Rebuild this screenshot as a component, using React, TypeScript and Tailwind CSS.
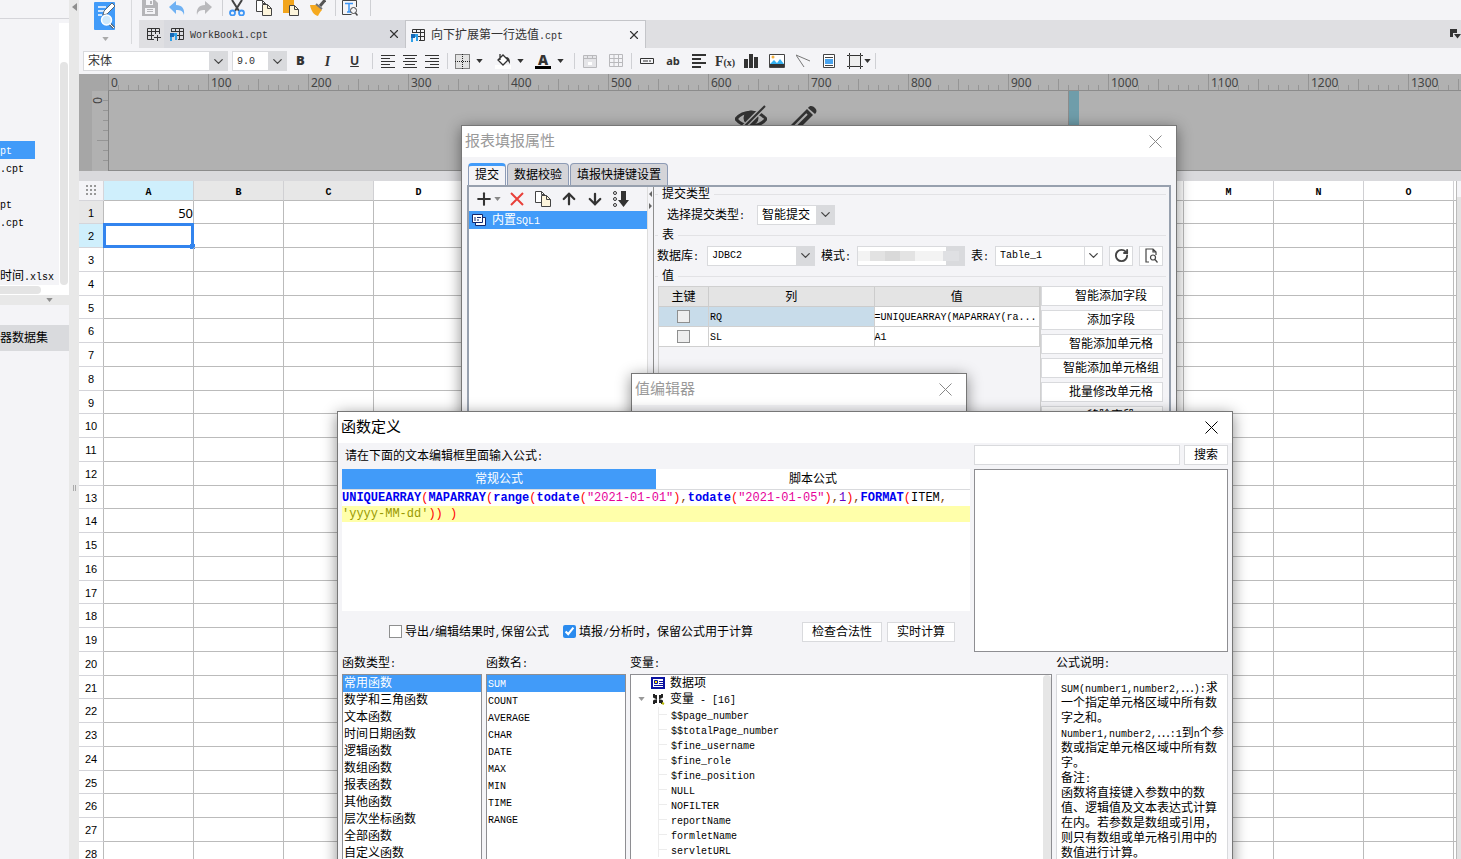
import { type ReactNode } from 'react';
import { ArrowDown, ArrowUp, ChevronDown, Plus, RotateCw, X } from 'lucide-react';

type FileRow = {
  name: string;
  selected?: boolean;
};

const files: FileRow[] = [
  { name: 'pt', selected: true },
  { name: '.cpt' },
  { name: '' },
  { name: 'pt' },
  { name: '.cpt' },
  { name: '' },
  { name: '' },
  { name: '时间.xlsx' },
];

const columns = 'ABCDEFGHIJKLMNO'.split('');
const rows = Array.from({ length: 28 }, (_, i) => i + 1);
const rulerMarks = Array.from({ length: 14 }, (_, i) => i * 100);

const functionTypes = [
  '常用函数',
  '数学和三角函数',
  '文本函数',
  '时间日期函数',
  '逻辑函数',
  '数组函数',
  '报表函数',
  '其他函数',
  '层次坐标函数',
  '全部函数',
  '自定义函数',
];

const functionNames = ['SUM', 'COUNT', 'AVERAGE', 'CHAR', 'DATE', 'MAX', 'MIN', 'TIME', 'RANGE'];

const variables = [
  '$$page_number',
  '$$totalPage_number',
  '$fine_username',
  '$fine_role',
  '$fine_position',
  'NULL',
  'NOFILTER',
  'reportName',
  'formletName',
  'servletURL',
];

const description = [
  'SUM(number1,number2,…):求',
  '一个指定单元格区域中所有数',
  '字之和。',
  'Number1,number2,…:1到n个参',
  '数或指定单元格区域中所有数',
  '字。',
  '备注:',
  '函数将直接键入参数中的数',
  '值、逻辑值及文本表达式计算',
  '在内。若参数是数组或引用，',
  '则只有数组或单元格引用中的',
  '数值进行计算。',
];

const fieldButtons = ['智能添加字段', '添加字段', '智能添加单元格', '智能添加单元格组', '批量修改单元格', '移除字段'];

// half-width runs are set in a 6px mono, the rest in the 12px CJK face
function T({ children }: { children: string }) {
  return (
    <span>
      {children.split(/([\x20-\x7e]+)/).map((part, i) =>
        i % 2 ? (
          <span key={i} className="font-['Liberation_Mono',monospace] text-[10px] whitespace-pre">
            {part}
          </span>
        ) : (
          part
        ),
      )}
    </span>
  );
}

function Sep({ tight }: { tight?: boolean }) {
  return (
    <div className={tight ? 'px-0.5' : 'px-1'}>
      <div className="h-4 w-px bg-[#cfd0d4]" />
    </div>
  );
}

function Caret({ className = 'fill-[#333]' }: { className?: string }) {
  return (
    <svg viewBox="0 0 8 5" className={`h-1 w-[7px] shrink-0 ${className}`}>
      <path d="M0 0h8L4 5z" />
    </svg>
  );
}

type ToolProps = {
  label: string;
  children: ReactNode;
  className?: string;
};

function Tool({ label, children, className = 'w-[26px] justify-center' }: ToolProps) {
  return (
    <button type="button" aria-label={label} className={`flex h-5 shrink-0 items-center ${className}`}>
      {children}
    </button>
  );
}

type ComboProps = {
  label: string;
  value: string;
  className: string;
  text?: string;
  plain?: boolean;
};

function Combo({ label, value, className, text = 'text-[12px]', plain }: ComboProps) {
  return (
    <div className={`relative flex h-5 shrink-0 border border-[#d9dadd] bg-white ${className}`}>
      <select aria-label={label} className={`w-full appearance-none bg-transparent pr-5 pl-1 outline-none ${text}`}>
        <option>{value}</option>
      </select>
      <span
        className={`pointer-events-none absolute inset-y-0 right-0 flex w-[18px] items-center justify-center ${plain ? 'border-l border-[#d9dadd]' : 'bg-[#d9dadd]'}`}
      >
        <ChevronDown size={15} strokeWidth={2} color="#444" className="shrink-0" />
      </span>
    </div>
  );
}

function PushButton({ children, className = '' }: { children: string; className?: string }) {
  return (
    <button type="button" className={`h-5 shrink-0 border border-[#d9dadd] bg-white leading-none ${className}`}>
      {children}
    </button>
  );
}

function SheetIcon() {
  return (
    <svg viewBox="0 0 14 14" className="size-[14px] shrink-0" fill="none">
      <path d="M1.500 5V1.500h12v11H8M1.500 4.500h12M5.500 1.500v3M9.500 1.500v11M6 8.500h7" stroke="#333" />
      <path d="M0 6h4v4H0z" fill="#1769b5" />
      <path d="M4 6h3v7H5V9H4zM0 10h2v4H0z" fill="#2ea0e8" />
    </svg>
  );
}

function PagesIcon() {
  return (
    <svg viewBox="0 0 16 16" className="size-4 shrink-0" fill="#fff" stroke="#444">
      <path d="M.5.5h6l3 3v8h-9z" />
      <path d="M6.500 4.500h5l4 4v7h-9z" fill="#fdf5dc" />
      <path d="M11.500 4.500v4h4M6.500.5v3h3" fill="none" />
    </svg>
  );
}

function Sidebar() {
  return (
    <>
      <aside className="flex w-[69px] shrink-0 flex-col overflow-hidden bg-[#f4f4f7]">
        <div className="h-[19px] shrink-0 border-b border-[#d5d5da]" />
        <div className="flex h-[266px] shrink-0 pt-1">
          <ul className="w-[59px] overflow-hidden pt-[118px]">
            {files.map((file, i) => (
              <li
                key={i}
                className={`h-[18px] leading-[18px] whitespace-nowrap ${file.selected ? 'w-[35px] bg-[#419bf9] text-white' : ''}`}
              >
                <T>{file.name}</T>
              </li>
            ))}
          </ul>
          <div className="flex-1 bg-white px-px pt-[39px]">
            <div className="h-full rounded-sm bg-[#e4e4e4]" />
          </div>
        </div>
        <div className="h-[10px] shrink-0 bg-white py-px">
          <div className="h-2 w-[41px] rounded-r bg-[#e4e4e4]" />
        </div>
        <div className="flex h-[10px] shrink-0 items-center justify-end bg-[#e8e8e8] pr-4">
          <Caret className="fill-[#8e8e8e]" />
        </div>
        <div className="h-5 shrink-0" />
        <h2 className="h-[26px] shrink-0 bg-[#d9dadd] leading-[26px] whitespace-nowrap">器数据集</h2>
      </aside>
      <div className="flex w-[10px] shrink-0 flex-col items-center justify-between bg-[#e8e8e8] pt-[3px]">
        <svg viewBox="0 0 5 8" className="h-2 w-[5px] fill-[#8e8e8e]">
          <path d="M5 0v8L0 4z" />
        </svg>
        <div className="flex w-full flex-1 items-center justify-center pt-[105px]">
          <div className="h-[6px] w-[3px] border-x border-[#aaa]" />
        </div>
      </div>
    </>
  );
}

function TopBar() {
  return (
    <header className="flex h-12 shrink-0 bg-[#f4f4f7]">
      <button type="button" aria-label="模板" className="flex w-[52px] shrink-0 flex-col items-center pt-px">
        <svg viewBox="0 0 22 30" className="h-[30px] w-[22px]">
          <rect y="1" width="21" height="28" rx="1" fill="#419bf9" />
          <path d="M4 6h8M4 10h6M4 14h4" stroke="#fff" strokeWidth="1.500" />
          <path d="M9 14l1-4 8-8 3 3-8 8z" fill="#fff" stroke="#5b6875" />
          <path d="M16 23l4 4" stroke="#5b6875" strokeWidth="3" />
          <path d="M16 23l4 4" stroke="#fff" />
          <circle cx="12.500" cy="19" r="5" fill="#cfe8fb" stroke="#fff" strokeWidth="1.500" />
        </svg>
        <span className="pt-1.5">
          <Caret className="fill-[#aaa]" />
        </span>
      </button>
      <div className="h-11 w-px shrink-0 bg-[#d9dadd]" />
      <div className="flex min-w-0 flex-1 flex-col pl-[7px]">
        <div className="flex h-5 shrink-0 items-start overflow-hidden">
          <div className="-mt-0.5 flex items-center">
            <Tool label="保存" className="w-[27px] px-[3px]">
              <svg viewBox="0 0 16 16" className="size-4">
                <path d="M0 0h13l3 3v13H0z" fill="#b5b5b8" />
                <path d="M4 0h7v5H4zM3 8h10v6H3z" fill="#f4f4f7" />
                <path d="M8 1h2v3H8zM5 9h6v1H5zM5 11h6v1H5z" fill="#b5b5b8" />
              </svg>
            </Tool>
            <Tool label="撤销" className="w-[27px] px-[3px]">
              <svg viewBox="0 0 16 16" className="size-4 fill-[#6fb1f3]">
                <path d="M0 7l7-6v4c6 0 9 4 8 10-1-4-3-5-8-5v4z" />
              </svg>
            </Tool>
            <Tool label="重做" className="w-[27px] px-[3px]">
              <svg viewBox="0 0 16 16" className="size-4 fill-[#b9b9bc]">
                <path d="M16 7L9 1v4C3 5 0 9 1 15c1-4 3-5 8-5v4z" />
              </svg>
            </Tool>
            <Sep tight />
            <Tool label="剪切" className="w-[27px] px-1">
              <svg viewBox="0 0 16 16" className="size-4" fill="none">
                <path d="M3 0l7 11M13 0L6 11" stroke="#444" strokeWidth="2" />
                <circle cx="3.500" cy="13" r="2.500" stroke="#3d95f5" strokeWidth="1.800" />
                <circle cx="12.500" cy="13" r="2.500" stroke="#3d95f5" strokeWidth="1.800" />
              </svg>
            </Tool>
            <Tool label="复制" className="w-[27px] px-1">
              <PagesIcon />
            </Tool>
            <Tool label="粘贴" className="w-[27px] px-1">
              <svg viewBox="0 0 16 16" className="size-4">
                <path d="M0 0h11v13H0z" fill="#f2a51d" />
                <path d="M6.500 5.500h5l4 4v6h-9z" fill="#fdf5dc" stroke="#444" />
                <path d="M11.500 5.500v4h4" fill="none" stroke="#444" />
              </svg>
            </Tool>
            <Tool label="格式刷" className="w-[27px] px-1">
              <svg viewBox="0 0 16 16" className="size-4">
                <path d="M10 6l5-6" stroke="#555" strokeWidth="3" />
                <path d="M0 5h7l5 5c-2 2-3 4-4 6-4-1-7-5-8-11z" fill="#f5a91f" />
                <path d="M6 4l6 5" stroke="#777" strokeWidth="2" />
              </svg>
            </Tool>
            <Sep tight />
            <Tool label="查找" className="w-[30px] px-1">
              <svg viewBox="0 0 16 16" className="size-4" fill="none" stroke="#444">
                <path d="M14.500 7V.5H.5v14h9" />
                <path d="M3 3.500h8M7 3v9M5 12h4" stroke="#3d95f5" strokeWidth="1.500" />
                <circle cx="11.500" cy="10.500" r="3" fill="#f4f4f7" />
                <path d="M13.500 13l2 2.500" strokeWidth="1.500" />
              </svg>
            </Tool>
            <Sep tight />
          </div>
        </div>
        <nav className="flex h-7 items-stretch bg-[#dfdfe2] text-[#333]">
          <button type="button" aria-label="新建" className="flex w-[25px] items-center pl-2">
            <svg viewBox="0 0 14 14" className="size-[14px]" fill="none" stroke="#333">
              <path d="M7 12.500H.5v-11h12V7M.5 4.500h12M.5 8.500H7M4.500 1v12M8.500 1v6M10.500 8v6M7 10.500h7" />
            </svg>
          </button>
          <div className="flex w-[242px] items-center gap-1.5 border-r border-[#c4c5c9] bg-[#d9dadf] pr-1 pl-1.5">
            <SheetIcon />
            <a href="#workbook1" className="flex-1">
              <T>WorkBook1.cpt</T>
            </a>
            <button type="button" aria-label="关闭">
              <X size={14} />
            </button>
          </div>
          <div className="flex w-[240px] items-center gap-1.5 border-t border-r border-[#c4c5c9] bg-[#f4f4f7] pr-1 pl-[5px]">
            <SheetIcon />
            <a href="#current" className="flex-1">
              <T>向下扩展第一行选值.cpt</T>
            </a>
            <button type="button" aria-label="关闭">
              <X size={14} />
            </button>
          </div>
          <button type="button" aria-label="更多" className="ml-auto w-3">
            <svg viewBox="0 0 12 10" className="h-[10px] w-3 fill-[#333]">
              <path d="M1 0h7v4H4v4H1zM5 5h7L8.500 9.500z" />
            </svg>
          </button>
        </nav>
      </div>
    </header>
  );
}

function FormatBar() {
  return (
    <div className="flex h-[26px] shrink-0 items-center bg-[#f4f4f7] pl-1 text-[#333]">
      <Combo label="字体" value="宋体" className="mr-1 w-[145px]" />
      <Combo label="字号" value="9.0" className="w-[55px]" text="font-['Liberation_Mono',monospace] text-[10px]" />
      <Tool label="加粗" className="w-[27px] justify-center">
        <b className="font-['Open_Sans',sans-serif] text-[13px] font-extrabold">B</b>
      </Tool>
      <Tool label="斜体" className="w-[27px] justify-center">
        <i className="font-['Liberation_Serif',serif] text-[14px] font-bold">I</i>
      </Tool>
      <Tool label="下划线" className="w-[27px] justify-center">
        <u className="text-[12px] font-bold">U</u>
      </Tool>
      <Sep />
      {['M0 1.500h14M0 4.500h9M0 7.500h14M0 10.500h9M0 13.500h14', 'M0 1.500h14M2 4.500h10M0 7.500h14M2 10.500h10M0 13.500h14', 'M0 1.500h14M5 4.500h9M0 7.500h14M5 10.500h9M0 13.500h14'].map(
        (d, i) => (
          <Tool key={d} label={['左对齐', '居中', '右对齐'][i]} className="w-[22px] justify-center">
            <svg viewBox="0 0 14 14" className="size-[14px]" stroke="#333">
              <path d={d} />
            </svg>
          </Tool>
        ),
      )}
      <Sep />
      <Tool label="边框" className="w-10 gap-1.5 pl-[3px]">
        <svg viewBox="0 0 15 15" className="size-[15px]">
          <rect width="15" height="15" fill="#e2e2e2" />
          <path d="M.5.5h14v14H.5zM7.500 0v15M0 7.500h15" fill="none" stroke="#222" strokeDasharray="1 1" />
        </svg>
        <Caret />
      </Tool>
      <Tool label="填充" className="w-10 gap-1.5 pl-[3px]">
        <svg viewBox="0 0 16 16" className="size-4">
          <path d="M0 12h16v4H0z" fill="#fff" />
          <path d="M3 7l5-5 5 5-5 5zM5 1v6" fill="#fff" stroke="#333" strokeWidth="1.300" />
          <path d="M11 4c3 0 4 2 4 7l-2-3z" fill="#333" />
        </svg>
        <Caret />
      </Tool>
      <Tool label="字体颜色" className="w-10 gap-1.5 pl-[3px]">
        <span className="flex w-4 flex-col items-center border-b-[3px] border-black font-['Open_Sans',sans-serif] text-[14px] leading-[13px] font-extrabold">
          A
        </span>
        <Caret />
      </Tool>
      <Sep tight />
      <Tool label="合并单元格">
        <svg viewBox="0 0 14 14" className="size-[14px]" stroke="#b9b9bc" fill="#e5e5e8">
          <path d="M.5 1.500h13v12H.5zM.5 4.500h13M4.500 1v3M9.500 1v3" />
          <path d="M5 8h4v3H5z" fill="#fff" stroke="none" />
        </svg>
      </Tool>
      <Tool label="取消合并">
        <svg viewBox="0 0 14 14" className="size-[14px]" stroke="#b9b9bc" fill="none">
          <path d="M.5.5h13v12H.5zM.5 4.500h13M.5 8.500h13M5 0v12M9.500 0v12" />
        </svg>
      </Tool>
      <Sep tight />
      <Tool label="文本控件">
        <svg viewBox="0 0 14 6" className="h-[6px] w-[14px]" stroke="#333" fill="none">
          <path d="M.5.5h13v5H.5zM3 3h5M10 2v2" />
        </svg>
      </Tool>
      <Tool label="普通文本">
        <b className="font-['Open_Sans',sans-serif] text-[11px]">ab</b>
      </Tool>
      <Tool label="富文本">
        <svg viewBox="0 0 14 14" className="size-[14px]" stroke="#333" strokeWidth="2">
          <path d="M0 1h14M0 5h9M0 9h14M0 13h9" />
        </svg>
      </Tool>
      <Tool label="公式">
        <span className="font-['Liberation_Serif',serif] text-[14px] font-bold">
          F<span className="text-[10px]">(x)</span>
        </span>
      </Tool>
      <Tool label="图表">
        <svg viewBox="0 0 14 14" className="size-[14px] fill-[#333]">
          <path d="M0 5h4v9H0zM5 0h4v14H5zM10 3h4v11h-4z" />
        </svg>
      </Tool>
      <Tool label="图片">
        <svg viewBox="0 0 16 14" className="h-[14px] w-4">
          <path d="M.5.5h15v13H.5z" fill="#fff" stroke="#444" />
          <path d="M1 10l4-4 3 3 3-4 4 5v1H1z" fill="#35b2f2" />
          <path d="M1 10h14v3H1z" fill="#333" />
          <circle cx="4" cy="3" r="1.500" fill="#f5b13d" />
        </svg>
      </Tool>
      <Tool label="斜线">
        <svg viewBox="0 0 14 14" className="size-[14px]" stroke="#777" fill="none">
          <path d="M0 1l14 6M0 1l8 12" />
        </svg>
      </Tool>
      <Tool label="子报表">
        <svg viewBox="0 0 12 14" className="h-[14px] w-3" fill="#fff" stroke="#444">
          <path d="M.5.5h11v13H.5zM2 3.500h8M2 11.500h8" />
          <path d="M2 5h8v5H2z" fill="#4aa4ee" stroke="none" />
        </svg>
      </Tool>
      <Tool label="悬浮元素" className="w-[31px] gap-px pl-[5px]">
        <svg viewBox="0 0 16 16" className="size-4" fill="#eee" stroke="#333">
          <path d="M2.500 2.500h11v11h-11z" />
          <path d="M0 2.500h2M2.500 0v2M13.500 0v2M14 2.500h2M0 13.500h2M2.500 14v2M13.500 14v2M14 13.500h2" />
        </svg>
        <Caret />
      </Tool>
      <Sep tight />
    </div>
  );
}

function Ruler() {
  return (
    <div className="h-[97px] shrink-0 overflow-hidden bg-[#b1b1b1] text-[#444]">
      <div className="flex h-[17px] bg-[#b1b1b1]">
        <div className="w-[29px] shrink-0 bg-[#a6a6a6]" />
        <div className="flex min-w-0 flex-1 overflow-hidden border-b border-[#8c8c8c]">
          {rulerMarks.map((mark) => (
            <div key={mark} className="relative h-4 w-[100px] shrink-0">
              <svg viewBox="0 0 100 16" className="absolute inset-0 h-4 w-[100px]" stroke="#959595">
                <path d="M.5 0v16M10.500 11v5M20.500 11v5M30.500 11v5M40.500 11v5M50.500 5v11M60.500 11v5M70.500 11v5M80.500 11v5M90.500 11v5" />
              </svg>
              <span className="relative pl-[3px] font-['Noto_Sans',sans-serif] text-[12px] leading-[17px]">{mark}</span>
            </div>
          ))}
        </div>
      </div>
      <div className="flex h-20">
        <div className="w-[13px] shrink-0 bg-[#a6a6a6]" />
        <div className="relative w-[17px] shrink-0 border-r border-[#858585]">
          <span className="font-['Noto_Sans',sans-serif] text-[12px] leading-[11px] [writing-mode:vertical-rl]">0</span>
          <svg viewBox="0 0 16 80" className="absolute inset-0 h-20 w-4" stroke="#959595">
            <path d="M11 9.500h5M11 19.500h5M11 29.500h5M11 39.500h5M5 49.500h11M11 59.500h5M11 69.500h5" />
          </svg>
        </div>
        <div className="relative flex-1 border-b border-[#8c8c8c]">
          {/* page edge and the two canvas handles */}
          <div className="absolute inset-y-0 left-[959px] w-[11px] border-l border-[#8c8c8c] bg-[#6f9daa]" />
          <svg viewBox="0 0 32 26" className="absolute top-[14px] left-[626px] h-[26px] w-8" fill="none" stroke="#333" strokeWidth="3">
            <path d="M1 14c7-9 23-9 30 0-7 9-23 9-30 0z" />
            <circle cx="16" cy="13" r="6" fill="#333" />
            <path d="M30 1L6 25" stroke="#b1b1b1" strokeWidth="5" />
            <path d="M30 1L6 25" strokeWidth="2" />
          </svg>
          <svg viewBox="0 0 28 28" className="absolute top-[15px] left-[680px] size-7" fill="#333">
            <path d="M18 3l6 6L8 25l-7 2 1-8z" />
            <path d="M19 2c2-3 5-2 7 0s2 4 0 6z" />
            <path d="M18 8L6 20" stroke="#b1b1b1" strokeWidth="2" />
          </svg>
        </div>
      </div>
    </div>
  );
}

function Sheet() {
  return (
    <div className="flex min-h-0 flex-1 bg-white">
      <div className="min-w-0 flex-1 overflow-hidden">
        <table className="w-full min-w-[1376px] table-fixed border-separate border-spacing-0 text-center">
          <colgroup>
            <col className="w-[25px]" />
            {columns.map((c) => (
              <col key={c} className="w-[90px]" />
            ))}
            <col />
          </colgroup>
          <thead>
            <tr className="h-5">
              <th className="border-r border-b border-[#d5d5da] bg-[#f4f4f7] p-0">
                <svg viewBox="0 0 11 11" className="mx-auto size-[11px] fill-[#999]">
                  <path d="M0 0h2v2H0zM4 0h2v2H4zM8 0h2v2H8zM0 4h2v2H0zM4 4h2v2H4zM8 4h2v2H8zM0 8h2v2H0zM4 8h2v2H4zM8 8h2v2H8z" />
                </svg>
              </th>
              {columns.map((c, i) => (
                <th
                  key={c}
                  className={`border-r border-b border-r-[#d0d0d3] border-b-[#bbb] px-0 pt-1 pb-0 font-['Liberation_Mono',monospace] text-[10px] leading-none font-bold ${i === 0 ? 'bg-[#cfeffc]' : i < 3 ? 'bg-[#e7e7e7]' : 'bg-white'}`}
                >
                  {c}
                </th>
              ))}
              <th className="border-r border-b border-[#bbb] p-0" />
            </tr>
          </thead>
          <tbody>
            {rows.map((r) => (
              <tr key={r} className={r % 4 === 1 ? 'h-[23px]' : 'h-6'}>
                <th
                  className={`border-r border-b border-r-[#bbb] border-b-[#d5d5da] px-0 pt-0.5 pb-0 font-['Liberation_Sans',sans-serif] text-[11px] leading-none font-normal ${r === 1 ? 'bg-[#e7e7e7]' : r === 2 ? 'bg-[#cfeffc]' : 'bg-white'}`}
                >
                  {r}
                </th>
                {columns.map((c) => {
                  const active = r === 2 && c === 'A';
                  return (
                    <td
                      key={c}
                      className="relative border-r border-b border-[#bbb] px-0 pt-0.5 pb-0 text-right font-['Noto_Sans',sans-serif] text-[13px] leading-none"
                    >
                      {r === 1 && c === 'A' ? '50' : null}
                      {active && (
                        <div className="absolute -inset-px border-[3px] border-[#3284ee]">
                          <i className="absolute -right-1 -bottom-1 size-[5px] bg-[#3284ee]" />
                        </div>
                      )}
                    </td>
                  );
                })}
                <td className="border-r border-b border-[#bbb] p-0" />
              </tr>
            ))}
          </tbody>
        </table>
      </div>
      <div className="w-1 shrink-0 bg-[#f4f4f7] pt-4">
        <div className="h-full bg-[#e2e2e2]" />
      </div>
    </div>
  );
}

type DialogProps = {
  title: string;
  className: string;
  muted?: boolean;
  children?: ReactNode;
};

function Dialog({ title, className, muted, children }: DialogProps) {
  return (
    <section
      role="dialog"
      aria-label={title}
      className={`absolute flex flex-col border border-[#777] bg-[#f4f4f7] shadow-[0_3px_14px_rgba(0,0,0,0.45)] ${className}`}
    >
      <div className="flex h-[31px] shrink-0 items-center justify-between bg-white pr-[14px] pl-[3px]">
        <h1 className={`text-[15px] ${muted ? 'text-[#999]' : 'text-black'}`}>{title}</h1>
        <button type="button" aria-label="关闭">
          <svg viewBox="0 0 13 13" className="size-[13px]" stroke={muted ? '#888' : '#000'}>
            <path d="M.5.5l12 12M12.500.5l-12 12" />
          </svg>
        </button>
      </div>
      {children}
    </section>
  );
}

function Legend({ children }: { children: string }) {
  return (
    <div className="flex h-[14px] shrink-0 items-center gap-1">
      <span className="h-px w-[3px] bg-[#e2e2e5]" />
      <h3 className="leading-[14px]">{children}</h3>
      <span className="h-px flex-1 bg-[#e2e2e5]" />
    </div>
  );
}

function SubmitDialog() {
  return (
    <Dialog title="报表填报属性" muted className="top-[125px] left-[461px] h-[420px] w-[716px]">
      <div className="flex shrink-0 items-end gap-px px-1.5 pt-1.5">
        {['提交', '数据校验', '填报快捷键设置'].map((tab, i) => (
          <button
            type="button"
            key={tab}
            className={`rounded-t-sm border border-b-0 border-[#8d9bb5] px-1.5 leading-none ${i === 0 ? 'h-[22px] border-t-[3px] border-t-[#419bf9] bg-[#f4f4f7] pb-0.5' : 'h-[22px] bg-[#d4d4d8]'}`}
          >
            {tab}
          </button>
        ))}
      </div>
      <div className="mx-[5px] flex min-h-0 flex-1 border-2 border-[#97a0ae]">
        <div className="flex w-[178px] shrink-0 flex-col">
          <div className="flex h-6 shrink-0 items-center">
            <Tool label="添加" className="w-9 justify-center">
              <Plus size={20} strokeWidth={2.5} color="#333" />
              <Caret className="fill-[#888]" />
            </Tool>
            <Tool label="删除" className="w-6 justify-center">
              <svg viewBox="0 0 14 14" className="size-[14px]" stroke="#e8403a" strokeWidth="2">
                <path d="M1 1l12 12M13 1L1 13" />
              </svg>
            </Tool>
            <Tool label="复制" className="w-7 justify-center">
              <PagesIcon />
            </Tool>
            <Tool label="上移" className="w-6 justify-center">
              <ArrowUp size={18} strokeWidth={3} color="#333" />
            </Tool>
            <Tool label="下移" className="w-7 justify-center">
              <ArrowDown size={18} strokeWidth={3} color="#333" />
            </Tool>
            <Tool label="排序" className="w-6 justify-center">
              <svg viewBox="0 0 16 16" className="size-4" fill="none" stroke="#333">
                <circle cx="2" cy="2" r="1.500" />
                <circle cx="2" cy="8" r="1.500" />
                <circle cx="2" cy="14" r="1.500" />
                <path d="M8 0h5v9h3l-5.500 7L5 9h3z" fill="#333" stroke="none" />
              </svg>
            </Tool>
          </div>
          <div className="flex-1 bg-white">
            <div className="flex h-[18px] items-center gap-1.5 bg-[#419bf9] pl-[3px] text-white">
              <svg viewBox="0 0 14 12" className="h-3 w-[14px]" fill="#fff" stroke="#12286f">
                <path d="M3.500 3.500h10v8h-10z" />
                <path d="M.5.5h10v8H.5zM3 3v4M5 3.500h4M5 6h2" />
              </svg>
              <T>内置SQL1</T>
            </div>
          </div>
        </div>
        <div className="w-[7px] shrink-0 border-r border-l border-r-[#8e8e8e] border-l-[#ddd] pt-1">
          <svg viewBox="0 0 5 18" className="h-[18px] w-[5px] fill-[#666]">
            <path d="M4 0v6L1 3zM1 12v6l3-3z" />
          </svg>
        </div>
        <div className="flex min-w-0 flex-1 flex-col pr-[3px] pl-px">
          <Legend>提交类型</Legend>
          <div className="flex h-[27px] shrink-0 items-center gap-3 pl-3">
            <T>选择提交类型:</T>
            <Combo label="选择提交类型" value="智能提交" className="w-[78px]" />
          </div>
          <Legend>表</Legend>
          <div className="flex h-[27px] shrink-0 items-center pl-0.5">
            <span className="w-[50px] shrink-0">
              <T>数据库:</T>
            </span>
            <Combo label="数据库" value="JDBC2" className="w-[108px]" text="font-['Liberation_Mono',monospace] text-[10px]" />
            <label htmlFor="schema" className="w-[42px] shrink-0 pl-1.5">
              <T>模式:</T>
            </label>
            <div className="relative flex h-5 w-[108px] shrink-0 border border-[#d9dadd] bg-[#d9dadd] pr-[18px]">
              <input id="schema" className="w-full bg-white" />
              {/* masked schema name */}
              <div className="absolute inset-x-0 top-1 flex h-[10px]">
                <i className="w-3 bg-[#f3f3f3]" />
                <i className="w-[15px] bg-[#e2e2e2]" />
                <i className="w-[15px] bg-[#d9d9d9]" />
                <i className="w-[15px] bg-[#e3e3e3]" />
                <i className="w-7 bg-[#f3f3f3]" />
                <i className="w-4 bg-[#dfe0e3]" />
              </div>
            </div>
            <span className="w-[30px] shrink-0 pl-1.5">
              <T>表:</T>
            </span>
            <Combo label="表" value="Table_1" plain className="w-[108px]" text="font-['Liberation_Mono',monospace] text-[10px]" />
            <Tool label="刷新" className="ml-1.5 w-6 justify-center border border-[#d9dadd] bg-white">
              <RotateCw size={15} strokeWidth={3} color="#444" />
            </Tool>
            <Tool label="预览" className="ml-1.5 w-6 justify-center border border-[#d9dadd] bg-white">
              <svg viewBox="0 0 13 15" className="h-[15px] w-[13px]" fill="none" stroke="#444" strokeWidth="1.200">
                <path d="M4 14H1V1h7l3 3v3M8 1v3h3" />
                <circle cx="8" cy="9.500" r="2.500" />
                <path d="M10 11.500l2.500 3" />
              </svg>
            </Tool>
          </div>
          <Legend>值</Legend>
          <div className="flex flex-1 pt-[3px] pl-[3px]">
            <div className="flex-1 border-t border-l border-[#d0d0d0]">
              <table className="w-full table-fixed border-separate border-spacing-0">
                <thead>
                  <tr className="h-5 bg-[#e4e4e4]">
                    <th className="w-[50px] border-r border-b border-[#ccc] p-0 leading-none font-normal">主键</th>
                    <th className="border-r border-b border-[#ccc] p-0 leading-none font-normal">列</th>
                    <th className="border-r border-b border-[#ccc] p-0 leading-none font-normal">值</th>
                  </tr>
                </thead>
                <tbody>
                  {[
                    { column: 'RQ', value: '=UNIQUEARRAY(MAPARRAY(ra...' },
                    { column: 'SL', value: 'A1' },
                  ].map((row, i) => (
                    <tr key={row.column} className="h-5 leading-4">
                      <td className={`border-r border-b border-[#d0d0d0] p-0 ${i === 0 ? 'bg-[#c8dcea]' : 'bg-white'}`}>
                        <input
                          type="checkbox"
                          aria-label={row.column}
                          className="mx-auto block size-[13px] appearance-none border border-[#8e8f8f] bg-[#eee]"
                        />
                      </td>
                      <td className={`border-r border-b border-[#d0d0d0] p-0 pl-px ${i === 0 ? 'bg-[#c8dcea]' : 'bg-white'}`}>
                        <T>{row.column}</T>
                      </td>
                      <td className="border-r border-b border-[#d0d0d0] bg-white p-0 whitespace-nowrap">
                        <T>{row.value}</T>
                      </td>
                    </tr>
                  ))}
                </tbody>
              </table>
            </div>
            <div className="flex w-[126px] shrink-0 flex-col gap-1 border-l border-[#d0d0d0] pr-[3px]">
              {fieldButtons.map((label) => (
                <PushButton key={label} className="pl-[18px]">
                  {label}
                </PushButton>
              ))}
            </div>
          </div>
        </div>
      </div>
    </Dialog>
  );
}

function List({ items, label, className }: { items: string[]; label: string; className: string }) {
  return (
    <div className={`flex shrink-0 flex-col ${className}`}>
      <h3 className="h-[22px] leading-[22px]">
        <T>{label}</T>
      </h3>
      <ul className="flex-1 overflow-hidden border border-[#8e8e92] bg-white">
        {items.map((item, i) => (
          <li key={item} className={`h-[17px] pl-px leading-[17px] whitespace-nowrap ${i === 0 ? 'bg-[#419bf9] text-white' : ''}`}>
            <T>{item}</T>
          </li>
        ))}
      </ul>
    </div>
  );
}

function FormulaDialog() {
  return (
    <Dialog title="函数定义" className="top-[411px] -bottom-6 left-[337px] w-[896px]">
      <div className="flex h-[209px] shrink-0 gap-1 px-1">
        <div className="flex min-w-0 flex-1 flex-col">
          <h2 className="h-[26px] shrink-0 pl-[3px] leading-[26px]">
            <T>请在下面的文本编辑框里面输入公式:</T>
          </h2>
          <div className="flex h-[21px] shrink-0 border-b border-[#d9dadd]">
            <button type="button" className="flex-1 bg-[#419bf9] leading-none text-white">
              常规公式
            </button>
            <button type="button" className="flex-1 bg-white leading-none">
              脚本公式
            </button>
          </div>
          <pre className="h-[121px] shrink-0 overflow-hidden bg-white font-['Liberation_Mono',monospace] text-[12px] leading-4 text-[#e60099]">
            <b className="text-[#0000f0]">UNIQUEARRAY</b>
            <span className="text-[#f00]">(</span>
            <b className="text-[#0000f0]">MAPARRAY</b>
            <span className="text-[#f00]">(</span>
            <b className="text-[#0000f0]">range</b>
            <span className="text-[#f00]">(</span>
            <b className="text-[#0000f0]">todate</b>
            <span className="text-[#f00]">(</span>
            "2021-01-01"
            <span className="text-[#f00]">)</span>
            <span className="text-[#804000]">,</span>
            <b className="text-[#0000f0]">todate</b>
            <span className="text-[#f00]">(</span>
            "2021-01-05"
            <span className="text-[#f00]">)</span>
            <span className="text-[#804000]">,</span>
            <span className="text-[#6400c8]">1</span>
            <span className="text-[#f00]">)</span>
            <span className="text-[#804000]">,</span>
            <b className="text-[#0000f0]">FORMAT</b>
            <span className="text-[#f00]">(</span>
            <span className="text-black">ITEM</span>
            <span className="text-[#804000]">,</span>
            <span className="block bg-[#ffffaa] text-[#999900]">
              'yyyy-MM-dd'<span className="text-[#f00]">)) )</span>
            </span>
          </pre>
          <div className="flex flex-1 items-center pr-[15px] pl-[47px]">
            <label className="flex items-center gap-[3px]">
              <input type="checkbox" className="size-[13px] appearance-none border border-[#8e8f8f] bg-white" />
              <T>导出/编辑结果时,保留公式</T>
            </label>
            <label className="ml-[14px] flex items-center gap-[3px]">
              <input type="checkbox" defaultChecked className="size-[13px] accent-[#2b8bee]" />
              <T>填报/分析时，保留公式用于计算</T>
            </label>
            <PushButton className="mr-[5px] ml-auto w-20">检查合法性</PushButton>
            <PushButton className="w-[68px]">实时计算</PushButton>
          </div>
        </div>
        <div className="flex w-[254px] shrink-0 flex-col gap-1 pt-0.5">
          <form className="flex gap-1">
            <input aria-label="搜索函数" className="h-5 min-w-0 flex-1 border border-[#d9dadd] bg-white px-1" />
            <PushButton className="w-11">搜索</PushButton>
          </form>
          <div className="flex-1 border border-[#8e8e92] bg-white" />
        </div>
      </div>
      <div className="flex min-h-0 flex-1 gap-1 px-1">
        <List label="函数类型:" items={functionTypes} className="w-[140px]" />
        <List label="函数名:" items={functionNames} className="w-[140px]" />
        <div className="flex min-w-0 flex-1 flex-col">
          <h3 className="h-[22px] leading-[22px]">
            <T>变量:</T>
          </h3>
          <div className="flex min-h-0 flex-1 overflow-hidden border border-[#8e8e92] bg-white">
            <div className="flex-1 pl-[7px]">
              <div className="flex h-4 items-center gap-[5px] pl-[13px]">
                <svg viewBox="0 0 14 12" className="h-3 w-[14px]" fill="#fff" stroke="#0a12a0">
                  <path d="M1 1h12v10H1z" strokeWidth="2" />
                  <path d="M8 4.500h4M8 6.500h4M3 8.500h9" />
                  <path d="M3.500 3.500h3v3h-3z" fill="#ffe600" />
                </svg>
                数据项
              </div>
              <div className="flex h-4 items-center">
                <Caret className="fill-[#999]" />
                <svg viewBox="0 0 14 12" className="mr-[5px] ml-1.5 h-3 w-[14px]" fill="none" stroke="#222" strokeWidth="2">
                  <path d="M3 1v3l2 1V2M11 1v3L9 5V2M3 11V8l2-1v3M11 11V8L9 7v3" />
                  <path d="M11 10l2 1" stroke="#b8b800" />
                </svg>
                <T>变量 - [16]</T>
              </div>
              <ul className="ml-5 border-l border-[#ececec]">
                {variables.map((name) => (
                  <li key={name} className="flex h-[15px] items-center">
                    <span className="mr-1 h-px w-2 bg-[#ececec]" />
                    <T>{name}</T>
                  </li>
                ))}
              </ul>
            </div>
            <div className="w-2 rounded-sm bg-[#e6e6e6]" />
          </div>
        </div>
        <div className="flex w-[172px] shrink-0 flex-col">
          <h3 className="h-[22px] leading-[22px]">
            <T>公式说明:</T>
          </h3>
          <div className="flex-1 overflow-hidden border border-[#d9dadd] bg-white pt-1 pl-1 font-['Noto_Sans_CJK_SC',sans-serif]">
            {description.map((line) => (
              <p key={line} className="h-[15px] leading-[15px] whitespace-nowrap">
                <T>{line}</T>
              </p>
            ))}
          </div>
        </div>
      </div>
    </Dialog>
  );
}

export default function App() {
  return (
    <div className="relative flex h-screen overflow-hidden bg-[#f4f4f7] font-['Liberation_Sans','Noto_Sans_CJK_SC',sans-serif] text-[12px] text-black">
      <Sidebar />
      <main className="flex min-w-0 flex-1 flex-col">
        <TopBar />
        <FormatBar />
        <Ruler />
        <div className="h-[10px] shrink-0 bg-[#d9d9dc]" />
        <Sheet />
      </main>
      <SubmitDialog />
      <Dialog title="值编辑器" muted className="top-[373px] left-[631px] h-[200px] w-[336px]" />
      <FormulaDialog />
    </div>
  );
}
